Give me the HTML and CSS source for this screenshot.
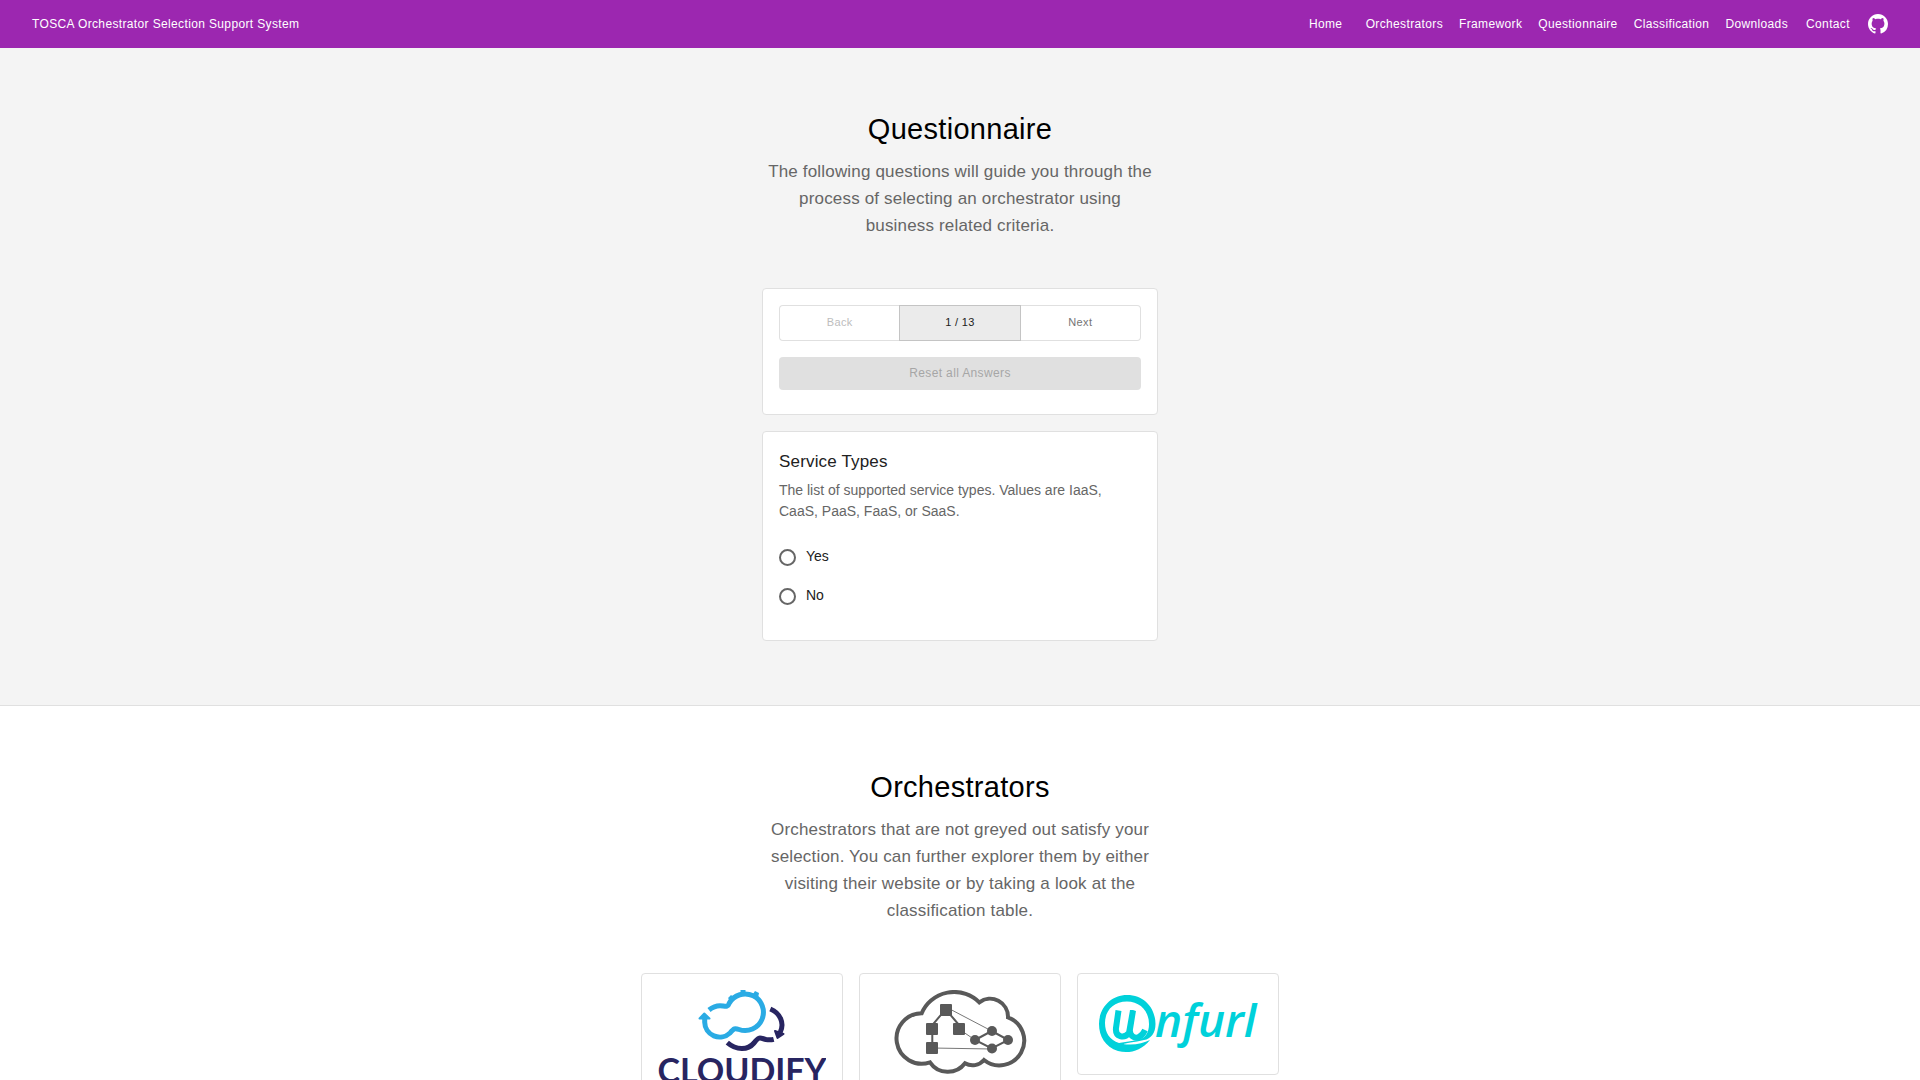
FILE: index.html
```html
<!DOCTYPE html>
<html lang="en">
<head>
<meta charset="utf-8">
<title>TOSCA Orchestrator Selection Support System</title>
<link rel="stylesheet" href="styles.css">
</head>
<body>
<header class="topbar">
  <a class="brand" href="#home">TOSCA Orchestrator Selection Support System</a>
  <nav class="nav">
    <a class="nav-link" href="#home">Home</a>
    <a class="nav-link" href="#orchestrators">Orchestrators</a>
    <a class="nav-link" href="#framework">Framework</a>
    <a class="nav-link" href="#questionnaire">Questionnaire</a>
    <a class="nav-link" href="#classification">Classification</a>
    <a class="nav-link" href="#downloads">Downloads</a>
    <a class="nav-link" href="#contact">Contact</a>
    <a class="nav-icon" href="#github" aria-label="GitHub">
      <svg width="20" height="20" viewBox="0 0 16 16" fill="currentColor"><path d="M8 0C3.58 0 0 3.58 0 8c0 3.54 2.29 6.53 5.47 7.59.4.07.55-.17.55-.38 0-.19-.01-.82-.01-1.49-2.01.37-2.53-.49-2.69-.94-.09-.23-.48-.94-.82-1.13-.28-.15-.68-.52-.01-.53.63-.01 1.08.58 1.23.82.72 1.21 1.87.87 2.33.66.07-.52.28-.87.51-1.07-1.78-.2-3.64-.89-3.64-3.95 0-.87.31-1.59.82-2.15-.08-.2-.36-1.02.08-2.12 0 0 .67-.21 2.2.82.64-.18 1.32-.27 2-.27s1.36.09 2 .27c1.53-1.04 2.2-.82 2.2-.82.44 1.1.16 1.92.08 2.12.51.56.82 1.27.82 2.15 0 3.07-1.87 3.75-3.65 3.95.29.25.54.73.54 1.48 0 1.07-.01 1.93-.01 2.2 0 .21.15.46.55.38A8.01 8.01 0 0 0 16 8c0-4.42-3.58-8-8-8z"/></svg>
    </a>
  </nav>
</header>
<main class="page">
  <section class="section section-tinted" id="questionnaire">
    <div class="column">
      <h2 class="title">Questionnaire</h2>
      <p class="lead">The following questions will guide you through the process of selecting an orchestrator using business related criteria.</p>
      <div class="card">
        <div class="pager">
          <button class="pager-button" type="button" disabled>Back</button>
          <button class="pager-button pager-current" type="button">1 / 13</button>
          <button class="pager-button" type="button">Next</button>
        </div>
        <button class="reset" type="button" disabled>Reset all Answers</button>
      </div>
      <form class="card">
        <h3 class="question-title">Service Types</h3>
        <p class="question-text">The list of supported service types. Values are IaaS, CaaS, PaaS, FaaS, or SaaS.</p>
        <div class="options">
          <label class="option"><input class="radio" type="radio" name="service-types" value="yes"><span class="option-text">Yes</span></label>
          <label class="option"><input class="radio" type="radio" name="service-types" value="no"><span class="option-text">No</span></label>
        </div>
      </form>
    </div>
  </section>
  <section class="section" id="orchestrators">
    <div class="column">
      <h2 class="title">Orchestrators</h2>
      <p class="lead">Orchestrators that are not greyed out satisfy your selection. You can further explorer them by either visiting their website or by taking a look at the classification table.</p>
    </div>
    <div class="grid">
      <a class="tile" href="#cloudify">
        <svg class="logo" viewBox="0 0 168 110" role="img" aria-label="Cloudify">
          <path d="M46.7 26V32.3A15 15 0 0 0 72 43C76 38 77 38 81 39.5A18.3 18.3 0 1 0 71.2 13.2C70 17 68 16.5 65 16C60 15 56 16 51 20" fill="none" stroke="#2aabe4" stroke-width="5"/>
          <path d="M46.3 23.5L51.5 28.5H41.5Z" fill="#2aabe4" stroke="#2aabe4" stroke-width="2" stroke-linejoin="round"/>
          <path d="M70 8l3-3 4 3-4 4zM82.5 0h5v5h-5zM95 4l2-3 4 2-1 5z" fill="#2aabe4"/>
          <g fill="none" stroke="#282561" stroke-width="5">
            <path d="M112.3 19C122 23 127 33 122 43"/>
            <path d="M69.3 52.7C79 61 90 60 96 53C101 46 102 48 108 49.5C111 50 113 50 115.7 49.3"/>
          </g>
          <path d="M117 41l8.5 3-6 4z" fill="#282561" stroke="#282561" stroke-width="2" stroke-linejoin="round"/>
          <text class="cloudify-name" x="84" y="93" text-anchor="middle">CLOUDIFY</text>
        </svg>
      </a>
      <a class="tile" href="#opentosca">
        <svg class="logo" viewBox="0 0 168 110" role="img" aria-label="OpenTOSCA">
          <path d="M45.7 23.3A35 34 0 0 1 103.3 12.3A18 18 0 0 1 132 27.3A24.8 24.8 0 1 1 108 70A15 15 0 0 1 89 73.3A21.5 21.5 0 0 1 54 72.3A25.2 25.2 0 1 1 45.7 23.3Z" fill="none" stroke="#595959" stroke-width="4"/>
          <path d="M69.7 19.3L56.3 35V58M69.7 19.3L83 35" fill="none" stroke="#595959" stroke-width="2"/>
          <path d="M70 17L115.7 41M83 39L99 50M56 58L116 59" fill="none" stroke="#777" stroke-width="1"/>
          <path d="M99 50L115.7 41L132.3 50L115.7 58.3Z" fill="none" stroke="#595959" stroke-width="2"/>
          <g fill="#595959"><rect x="64" y="14" width="12" height="12" rx="1"/><rect x="50" y="33" width="12" height="12" rx="1"/><rect x="77" y="33" width="12" height="12" rx="1"/><rect x="50" y="52" width="12" height="12" rx="1"/><circle cx="99" cy="50" r="5"/><circle cx="116" cy="41" r="5"/><circle cx="132" cy="50" r="5"/><circle cx="116" cy="58.5" r="5"/></g>
        </svg>
      </a>
      <a class="tile" href="#unfurl">
        <svg class="logo" viewBox="0 0 168 68" role="img" aria-label="unfurl">
          <path fill-rule="evenodd" d="M33 5C51 5 61.5 19 61.5 34C61.5 43 57 49 50 50C38 53 22 54 34 54.5C42 55 50 53 56 50C47 61 35 64 24 61C11 57 5 46 5 34C5 18 17 5 33 5ZM33 11.5C19 11.5 11 21 11 33C11 43 16 50 25 53L44 50C52 48 55 42 55 34C55 21 46 11.5 33 11.5Z" fill="#00d1da"/>
          <path d="M24.5 20.5L22 38C21 47 30 49 35 43L39 20.5M39 20.5L36 39C35 46 41 49 45 47C49 45 50 42 51 40" fill="none" stroke="#00d1da" stroke-width="6"/>
          <text class="unfurl-name" x="61" y="47">nfurl</text>
        </svg>
      </a>
    </div>
  </section>
</main>
</body>
</html>
```
FILE: styles.css
```css
* { box-sizing: border-box; }

body {
  margin: 0;
  height: 100vh;
  display: flex;
  flex-direction: column;
  font-family: "Liberation Sans", Arial, sans-serif;
  color: #000;
  background: #fff;
}

a { color: inherit; text-decoration: none; }

.topbar {
  flex: none;
  display: flex;
  align-items: center;
  justify-content: space-between;
  height: 48px;
  padding: 0 32px;
  background: #9c27b0;
  color: #fff;
  font-size: 12px;
  font-weight: 500;
  letter-spacing: 0.03em;
}

.nav { display: flex; align-items: center; }

.nav-link {
  min-width: 64px;
  padding: 8px;
  text-align: center;
}

.nav-icon { display: flex; margin-left: 8px; }

.page {
  flex: 1;
  min-height: 0;
  overflow-y: auto;
  scrollbar-width: none;
}

.section { padding: 64px 32px; }

.section-tinted {
  background: #f4f4f4;
  border-bottom: 1px solid #e0e0e0;
}

.column { max-width: 396px; margin: 0 auto; }

.title {
  margin: 0;
  font-size: 29px;
  line-height: 34px;
  font-weight: 400;
  letter-spacing: 0.01em;
  text-align: center;
}

.lead {
  margin: 12px 0 48px;
  padding: 0 4px;
  color: #666;
  font-size: 17px;
  line-height: 1.6;
  letter-spacing: 0.01em;
  text-align: center;
}

.card {
  padding: 16px 16px 24px;
  margin-bottom: 16px;
  background: #fff;
  border: 1px solid #e0e0e0;
  border-radius: 4px;
}

.card:last-child { margin-bottom: 0; }

.pager { display: flex; }

.pager-button {
  flex: 1;
  height: 36px;
  padding: 0 6px 2px;
  border: 1px solid #e0e0e0;
  background: #fff;
  color: #757575;
  font: inherit;
  font-size: 11px;
  letter-spacing: 0.03em;
}

.pager-button:first-child { border-right: 0; border-radius: 4px 0 0 4px; }
.pager-button:last-child { border-left: 0; border-radius: 0 4px 4px 0; }
.pager-button:disabled { color: #bdbdbd; }

.pager-current {
  background: #ebebeb;
  border-color: #c4c4c4;
  color: #212121;
}

.reset {
  width: 100%;
  height: 33px;
  margin-top: 16px;
  border: 0;
  border-radius: 4px;
  background: #e0e0e0;
  color: #a6a6a6;
  font: inherit;
  font-size: 12px;
  letter-spacing: 0.03em;
}

.question-title {
  margin: 0;
  color: #212121;
  font-size: 17px;
  line-height: 1.6;
  font-weight: 400;
  letter-spacing: 0.01em;
}

.question-text {
  margin: 5px 0 16px;
  color: #666;
  font-size: 14px;
  line-height: 21px;
}

.option {
  display: flex;
  align-items: center;
  gap: 10px;
  height: 39px;
  color: #212121;
  font-size: 14px;
}

.option-text { padding-bottom: 2px; }

.radio {
  appearance: none;
  width: 17px;
  height: 17px;
  margin: 0;
  border: 2px solid #666;
  border-radius: 50%;
}

.radio:checked { background: #9c27b0; box-shadow: inset 0 0 0 3px #fff; }

.grid {
  display: grid;
  grid-template-columns: repeat(3, 202px);
  justify-content: center;
  align-items: start;
  gap: 16px;
}

.tile {
  display: block;
  padding: 16px;
  border: 1px solid #e0e0e0;
  border-radius: 4px;
}

.logo { display: block; width: 100%; }

.cloudify-name {
  fill: #282561;
  font: 700 34px Lato, sans-serif;
}

.unfurl-name {
  fill: #00d1da;
  font: italic 600 46px "Open Sans", sans-serif;
}
```
